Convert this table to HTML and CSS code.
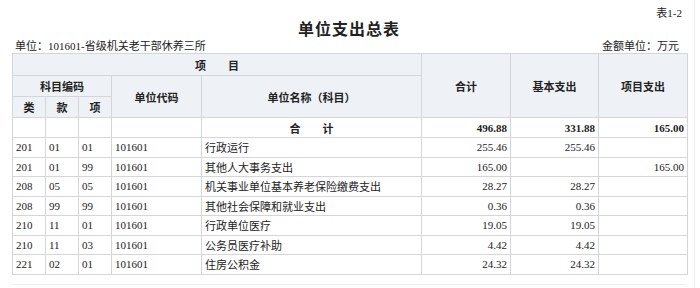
FILE: index.html
```html
<!DOCTYPE html>
<html>
<head>
    <link rel="stylesheet" href="styles.css">
</head>
<body>
    <div class="frame">
        <div class="table-no">表1-2</div>
        <h1 class="title">单位支出总表</h1>
        <div class="sub-line">
            <span>单位：101601-省级机关老干部休养三所</span>
            <span class="unit">金额单位：万元</span>
        </div>
        <table class="report">
            <colgroup>
                <col class="c-code"><col class="c-code"><col class="c-code">
                <col class="c-unit"><col class="c-name">
                <col class="c-num"><col class="c-num2"><col class="c-num">
            </colgroup>
            <thead>
                <tr class="h1">
                    <th colspan="5">项　　目</th>
                    <th rowspan="3">合计</th>
                    <th rowspan="3">基本支出</th>
                    <th rowspan="3">项目支出</th>
                </tr>
                <tr class="h2">
                    <th colspan="3">科目编码</th>
                    <th rowspan="2">单位代码</th>
                    <th rowspan="2">单位名称（科目）</th>
                </tr>
                <tr class="h3">
                    <th>类</th>
                    <th>款</th>
                    <th>项</th>
                </tr>
            </thead>
            <tbody>
                <tr class="total">
                    <td></td><td></td><td></td><td></td>
                    <td class="center">合　　计</td>
                    <td class="num">496.88</td>
                    <td class="num">331.88</td>
                    <td class="num">165.00</td>
                </tr>
                <tr>
                    <td>201</td><td>01</td><td>01</td><td>101601</td>
                    <td>行政运行</td>
                    <td class="num">255.46</td><td class="num">255.46</td><td class="num"></td>
                </tr>
                <tr>
                    <td>201</td><td>01</td><td>99</td><td>101601</td>
                    <td>其他人大事务支出</td>
                    <td class="num">165.00</td><td class="num"></td><td class="num">165.00</td>
                </tr>
                <tr>
                    <td>208</td><td>05</td><td>05</td><td>101601</td>
                    <td>机关事业单位基本养老保险缴费支出</td>
                    <td class="num">28.27</td><td class="num">28.27</td><td class="num"></td>
                </tr>
                <tr>
                    <td>208</td><td>99</td><td>99</td><td>101601</td>
                    <td>其他社会保障和就业支出</td>
                    <td class="num">0.36</td><td class="num">0.36</td><td class="num"></td>
                </tr>
                <tr>
                    <td>210</td><td>11</td><td>01</td><td>101601</td>
                    <td>行政单位医疗</td>
                    <td class="num">19.05</td><td class="num">19.05</td><td class="num"></td>
                </tr>
                <tr>
                    <td>210</td><td>11</td><td>03</td><td>101601</td>
                    <td>公务员医疗补助</td>
                    <td class="num">4.42</td><td class="num">4.42</td><td class="num"></td>
                </tr>
                <tr>
                    <td>221</td><td>02</td><td>01</td><td>101601</td>
                    <td>住房公积金</td>
                    <td class="num">24.32</td><td class="num">24.32</td><td class="num"></td>
                </tr>
            </tbody>
        </table>
        <div class="ghost-line"></div>
    </div>
</body>
</html>
```

FILE: styles.css
```css
body {
    margin: 0;
    font-family: "Liberation Serif", "Noto Sans CJK SC", serif;
    color: #222;
}

.frame {
    width: 695px;
    height: 288px;
    box-sizing: border-box;
    padding: 0 8px 0 12px;
    border-right: 1px solid #eceef2;
    overflow: hidden;
}

.table-no {
    font-size: 11px;
    line-height: 14px;
    padding-top: 6px;
    padding-right: 4px;
    text-align: right;
}

.title {
    margin: 0;
    font-size: 16px;
    line-height: 20px;
    letter-spacing: 1px;
    text-align: center;
}

.sub-line {
    display: flex;
    justify-content: space-between;
    font-size: 11px;
    line-height: 13px;
    padding: 0 7px 0 3px;
}

.report {
    width: 675px;
    border-collapse: collapse;
    table-layout: fixed;
    font-size: 11px;
    border: 1px solid #c9ccd1;
}

.c-code { width: 33px; }
.c-unit { width: 90px; }
.c-name { width: 220px; }
.c-num { width: 89px; }
.c-num2 { width: 88px; }

.report th,
.report td {
    border: 1px solid #d4d6da;
    padding: 0 3px;
    white-space: nowrap;
    overflow: hidden;
}

.report th {
    background: #eef1f6;
    font-weight: bold;
    text-align: center;
}

.h1 { height: 22px; }
.h2 { height: 21px; }
.h3 { height: 21px; }

.report tbody tr { height: 19.5px; }
.report tbody tr.total { height: 20px; }

.total td { font-weight: bold; }

.center { text-align: center; }

.num { text-align: right; }

.ghost-line {
    margin-top: 9px;
    border-top: 1px solid #eef0f3;
}
```
